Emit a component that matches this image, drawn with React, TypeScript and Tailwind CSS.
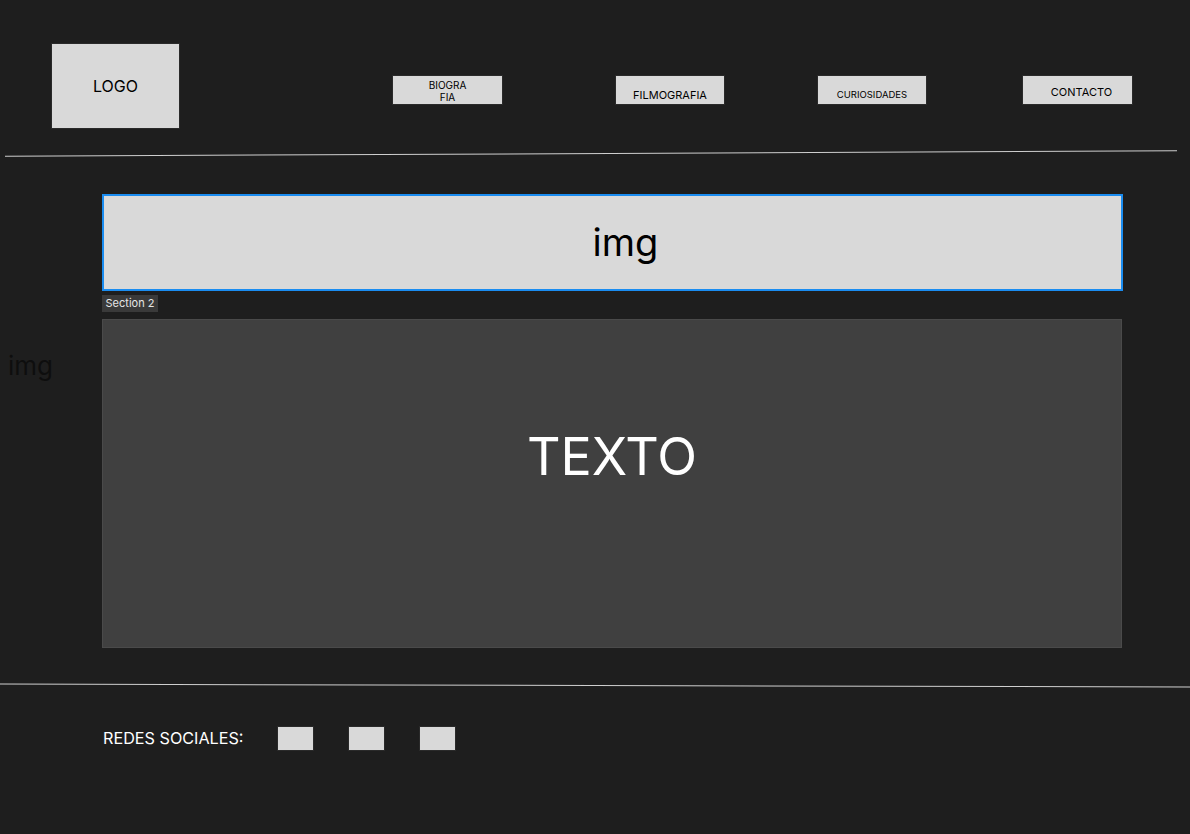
import React from 'react';

const navBtn =
  'h-[28px] bg-[#d9d9d9] shadow-[0_0_0_1px_#2a2a2a] text-black flex justify-center';

export default function App() {
  return (
    <div
      className="w-[1190px] h-[834px] bg-[#1e1e1e] overflow-hidden flex flex-col"
      style={{ fontFamily: 'Inter, "Noto Sans", sans-serif' }}
    >
      {/* Header */}
      <header className="flex items-start h-[153px]">
        <div className="ml-[52px] mt-[44px] w-[127px] h-[84px] bg-[#d9d9d9] shadow-[0_0_0_1px_#2a2a2a] flex items-center justify-center text-[16px] text-black">
          LOGO
        </div>
        <nav className="flex items-start mt-[76px] ml-[214px]">
          <div className={`${navBtn} w-[109px] flex-col items-center pt-px text-[10px] leading-[12px]`}>
            <span>BIOGRA</span>
            <span>FIA</span>
          </div>
          <div className={`${navBtn} w-[108px] ml-[114px] items-end pb-[3px] text-[11px] leading-none`}>FILMOGRAFIA</div>
          <div className={`${navBtn} w-[108px] ml-[94px] items-end pb-[5px] text-[9.5px] leading-none`}>CURIOSIDADES</div>
          <div className={`${navBtn} w-[109px] ml-[97px] items-end pl-[8px] pb-[6px] text-[11px] leading-none`}>CONTACTO</div>
        </nav>
      </header>

      <div className="ml-[5px] w-[1172px] h-px bg-[#cfcfcf] -rotate-[0.27deg]" />

      {/* Main */}
      <main className="flex pt-[40px]">
        <div className="w-[102px] pl-[8px] pt-[159px] text-[26px] leading-none text-[#0e0e0e]">img</div>
        <div className="flex flex-col">
          <div className="w-[1021px] h-[97px] bg-[#d9d9d9] border-2 border-[#1a8cf0] flex items-center justify-center pl-[26px] text-[38px] text-black">
            img
          </div>
          <div className="mt-[4px] w-[56px] h-[17px] bg-[#3a3a3a] text-[#e6e6e6] text-[11px] flex items-center justify-center">
            Section 2
          </div>
          <div className="mt-[7px] w-[1020px] h-[329px] bg-[#404040] border border-[#4a4a4a] flex items-center justify-center pb-[54px] text-[52px] text-white">
            TEXTO
          </div>
        </div>
      </main>

      <div className="mt-[37px] w-[1190px] h-px bg-[#cfcfcf] rotate-[0.14deg]" />

      {/* Footer */}
      <footer className="flex items-center pl-[103px] pt-[40px]">
        <span className="text-[16.2px] text-white">REDES SOCIALES:</span>
        <div className="flex gap-[36px] ml-[34px]">
          <div className="w-[35px] h-[23px] bg-[#d9d9d9] shadow-[0_0_0_1px_#2a2a2a]" />
          <div className="w-[35px] h-[23px] bg-[#d9d9d9] shadow-[0_0_0_1px_#2a2a2a]" />
          <div className="w-[35px] h-[23px] bg-[#d9d9d9] shadow-[0_0_0_1px_#2a2a2a]" />
        </div>
      </footer>
    </div>
  );
}
